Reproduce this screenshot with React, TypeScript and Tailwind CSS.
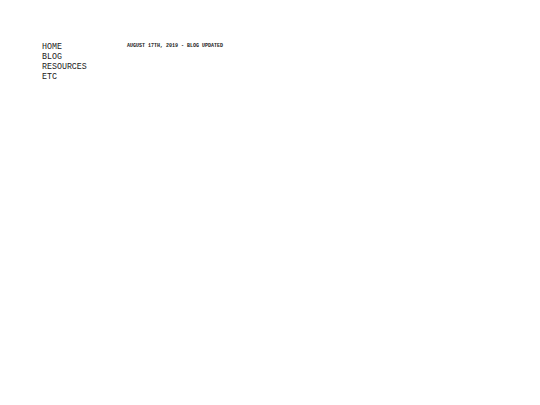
export default function App() {
  return (
    <div className="min-h-[405px] bg-white pt-[42px] pl-[42px] flex text-[#222]">
      <nav className="w-[85px] flex flex-col font-['Liberation_Mono',monospace] text-[8.3px] leading-[10px] font-normal">
        <a href="#">HOME</a>
        <a href="#">BLOG</a>
        <a href="#">RESOURCES</a>
        <a href="#">ETC</a>
      </nav>
      <main className="pt-[0.5px] font-['Liberation_Mono',monospace] text-[5px] leading-[6px] font-bold">
        <p>AUGUST 17TH, 2019 - BLOG UPDATED</p>
      </main>
    </div>
  );
}
